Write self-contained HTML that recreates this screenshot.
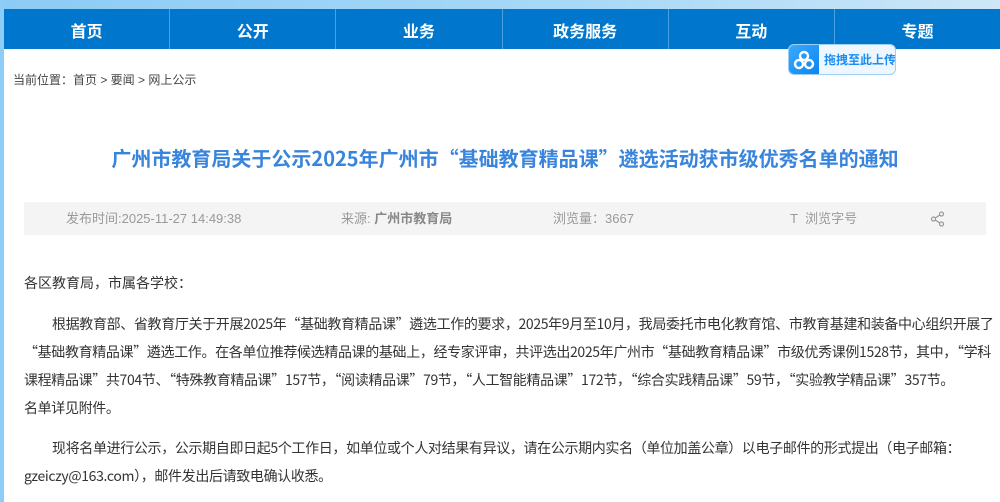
<!DOCTYPE html>
<html><head><meta charset="utf-8"><style>
*{margin:0;padding:0;box-sizing:border-box}
body{width:1000px;height:502px;overflow:hidden;background:#fff;font-family:"Liberation Sans","Noto Sans CJK SC",sans-serif;position:relative}
.sky{position:absolute;left:0;top:0;width:1000px;height:10px;background:linear-gradient(90deg,#8ccbf5,#a9d9f7 60%,#cde7f7)}
.stripe{position:absolute;left:0;top:0;width:4px;height:502px;background:#8dcdfa}
.nav{position:absolute;left:4px;top:9px;width:996px;height:40px;background:#0077cc;display:flex}
.nav div{flex:1;color:#fff;font-weight:bold;font-size:16px;text-align:center;line-height:47px;border-right:1px solid #4aa0e0}
.nav div:last-child{border-right:none}
.crumb{position:absolute;left:13px;top:71px;font-size:12px;color:#444}
.up{position:absolute;left:788px;top:44px;width:108px;height:31px;border:1px solid #9cd0f5;border-radius:6px;background:#eef7ff;overflow:hidden}
.up .ic{position:absolute;left:0;top:0;width:30px;height:31px;background:linear-gradient(135deg,#3aaaff,#0a84f0)}
.up span{position:absolute;left:35px;top:7px;font-size:12px;font-weight:bold;color:#1a8ef0;white-space:nowrap;font-family:"Noto Sans CJK SC",sans-serif;line-height:16px}
h1{position:absolute;left:0;width:1010px;top:144px;text-align:center;font-size:20px;color:#3a85dc;font-weight:bold;font-family:"Noto Sans CJK SC",sans-serif;line-height:28px;white-space:nowrap}
.meta{position:absolute;left:24px;top:202px;width:962px;height:33px;background:#f4f4f4;font-size:13px;color:#999;line-height:34px}
.meta span{position:absolute;top:0}
.body{position:absolute;left:24px;top:269px;font-size:14px;color:#333;line-height:28px;white-space:nowrap;font-family:"Noto Sans CJK SC",sans-serif}
.body p{line-height:28px}
.body p.ind{text-indent:28px;letter-spacing:-0.35px}
</style></head><body>
<div class="sky"></div><div class="stripe"></div>
<div class="nav"><div>首页</div><div>公开</div><div>业务</div><div>政务服务</div><div>互动</div><div>专题</div></div>
<div class="crumb">当前位置：首页 &gt; 要闻 &gt; 网上公示</div>
<div class="up"><div class="ic"><svg width="30" height="31" viewBox="0 0 30 31"><g fill="none" stroke="#fff" stroke-width="2.4"><circle cx="15" cy="11" r="4"/><circle cx="10" cy="19" r="4"/><circle cx="20" cy="19" r="4"/></g></svg></div><span>拖拽至此上传</span></div>
<h1>广州市教育局关于公示2025年广州市“基础教育精品课”遴选活动获市级优秀名单的通知</h1>
<div class="meta"><span style="left:42px">发布时间:2025-11-27 14:49:38</span><span style="left:317px">来源: <b style="color:#888">广州市教育局</b></span><span style="left:529px">浏览量：3667</span><span style="left:766px">T&nbsp;&nbsp;浏览字号</span>
<svg style="position:absolute;left:906px;top:9px" width="16" height="16" viewBox="0 0 16 16"><g fill="none" stroke="#999" stroke-width="1.2"><circle cx="11.5" cy="3" r="2"/><circle cx="3.5" cy="8" r="2"/><circle cx="11.5" cy="13" r="2"/><path d="M9.8 4 5.2 7M5.2 9l4.6 3"/></g></svg></div>
<div class="body">
<p>各区教育局，市属各学校：</p>
<p class="ind" style="margin-top:13px">根据教育部、省教育厅关于开展2025年“基础教育精品课”遴选工作的要求，2025年9月至10月，我局委托市电化教育馆、市教育基建和装备中心组织开展了<br>“基础教育精品课”遴选工作。在各单位推荐候选精品课的基础上，经专家评审，共评选出2025年广州市“基础教育精品课”市级优秀课例1528节，其中，“学科<br>课程精品课”共704节、“特殊教育精品课”157节，“阅读精品课”79节，“人工智能精品课”172节，“综合实践精品课”59节，“实验教学精品课”357节。<br>名单详见附件。</p>
<p class="ind" style="margin-top:12px">现将名单进行公示，公示期自即日起5个工作日，如单位或个人对结果有异议，请在公示期内实名（单位加盖公章）以电子邮件的形式提出（电子邮箱：<br>gzeiczy@163.com），邮件发出后请致电确认收悉。</p>
</div>
</body></html>
